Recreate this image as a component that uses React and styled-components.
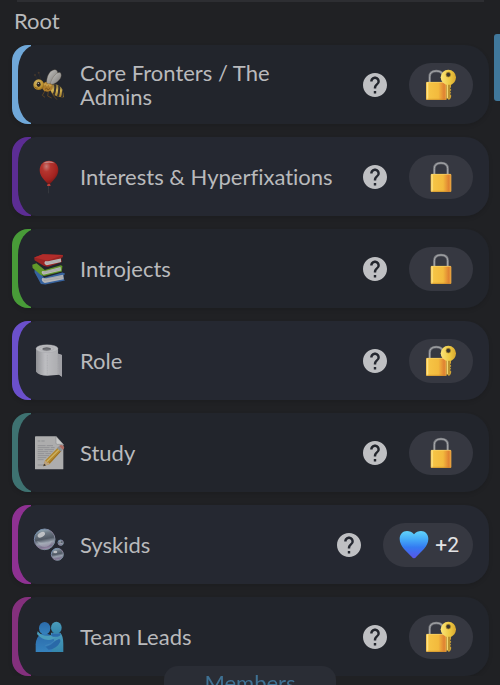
import React, { useId } from 'react';
import styled, { createGlobalStyle, css } from 'styled-components';

const BeeIcon = () => (
  <Emoji viewBox="0 0 102 102" aria-hidden="true">
    <defs>
      <linearGradient id="beeWing" x1="0" y1="0" x2="1" y2="1">
        <stop offset="0" stopColor="#f4f2ec" />
        <stop offset="1" stopColor="#8d8a86" />
      </linearGradient>
      <radialGradient id="beeHead" cx=".4" cy=".35" r=".7">
        <stop offset="0" stopColor="#ffe082" />
        <stop offset=".7" stopColor="#e3ac2e" />
        <stop offset="1" stopColor="#a06f1a" />
      </radialGradient>
      <linearGradient id="beeBody" x1="0" y1="0" x2="0" y2="1">
        <stop offset="0" stopColor="#7b6732" />
        <stop offset=".5" stopColor="#ffd75c" />
        <stop offset="1" stopColor="#b3831f" />
      </linearGradient>
      <clipPath id="beeTail">
        <path d="M59 52C72 44 88 51 94 64C97 73 97 80 99 88C86 89 71 85 63 75C58 68 56 58 59 52Z" />
      </clipPath>
    </defs>
    <g fill="none" stroke="#6b4c22" strokeWidth="3">
      <path d="M20 37L13 22M30 36L23 14" strokeWidth="1" stroke="#4d3c2c" />
      <path d="M42 68L34 82L42 88M52 70L50 84L62 90M60 70L68 84L78 95" />
    </g>
    <circle cx="12" cy="21" r="3" fill="#4d3c2c" />
    <circle cx="23" cy="14" r="3" fill="#4d3c2c" />
    <g clipPath="url(#beeTail)">
      <rect x="55" y="43" width="46" height="48" fill="url(#beeBody)" />
      <path d="M70 44Q77 60 67 84M83 46Q88 66 79 92M95 60Q98 76 91 92" fill="none" stroke="#3c3530" strokeWidth="6" />
    </g>
    <ellipse cx="49" cy="56" rx="16" ry="15" fill="#d0922b" />
    <path d="M38 52L43 47L48 53L53 47L57 54L61 51" fill="none" stroke="#f0bd55" strokeWidth="4" />
    <path d="M42 64L47 60L51 66L57 61" fill="none" stroke="#99631b" strokeWidth="3" />
    <path d="M47 43C47 26 55 7 71 5C85 5 82 28 66 42C59 48 48 49 47 43Z" fill="url(#beeWing)" stroke="#746653" strokeWidth="1" />
    <path d="M59 43C65 25 79 10 88 14C96 24 85 40 69 47C62 50 57 49 59 43Z" fill="url(#beeWing)" stroke="#746653" strokeWidth="1" />
    <circle cx="23" cy="50" r="16" fill="url(#beeHead)" />
    <ellipse cx="23" cy="49" rx="6" ry="8" fill="#30271d" />
    <circle cx="22" cy="46" r="2" fill="#fff" />
    <path d="M11 56Q14 62 20 60" fill="none" stroke="#75501b" strokeWidth="2" />
  </Emoji>
);

const BalloonIcon = () => (
  <Emoji viewBox="0 0 102 102" aria-hidden="true">
    <defs>
      <radialGradient id="balloonSkin" cx=".36" cy=".24" r=".75">
        <stop offset="0" stopColor="#ee8f87" />
        <stop offset=".3" stopColor="#d9382e" />
        <stop offset=".75" stopColor="#c3221c" />
        <stop offset="1" stopColor="#861511" />
      </radialGradient>
    </defs>
    <path d="M53 77Q51 88 53 100" fill="none" stroke="#666" strokeWidth="1" />
    <path d="M54 2C71 2 82 14 82 30C82 48 67 62 54 74C40 62 26 48 26 30C26 14 37 2 54 2Z" fill="url(#balloonSkin)" />
    <path d="M36 10Q53 -2 72 10Q54 6 36 10Z" fill="#f2d6d2" opacity=".6" />
    <path d="M50 72H57L59 78H48Z" fill="#df473d" />
  </Emoji>
);

const BooksIcon = () => (
  <Emoji viewBox="0 0 106 102" aria-hidden="true">
    <path d="M11 53L17 49L41 78L98 62L106 65L105 68L101 71L103 84L106 87L45 99L31 98L11 61Z" fill="#3c72bb" />
    <path d="M35 79Q30 88 43 95L102 83L100 69L48 80Z" fill="#d9dadb" />
    <path d="M39 82L100 73M40 87L101 78" stroke="#9da0a5" strokeWidth="1" fill="none" />
    <path d="M4 38L17 33L43 54L93 39L98 42L96 59L41 73L31 70L5 48Z" fill="#72b52a" />
    <path d="M36 57Q29 62 39 69L94 56L92 45L45 57Z" fill="#e0e0dc" />
    <path d="M38 60L91 49M38 64L92 53" stroke="#999" strokeWidth="1" fill="none" />
    <path d="M10 15L37 5L100 7L99 14L94 17L96 29L53 44L41 42L11 24Z" fill="#b82522" />
    <path d="M44 27Q38 35 49 39L94 29L93 18L53 27Z" fill="#e3e1df" />
    <path d="M46 31L92 22M46 35L93 26" stroke="#aaa" strokeWidth="1" fill="none" />
    <path d="M10 15L37 5L100 7L51 25Z" fill="#d52e2a" />
  </Emoji>
);

const PaperRollIcon = () => (
  <Emoji viewBox="0 0 102 102" aria-hidden="true">
    <defs>
      <linearGradient id="rollSide">
        <stop offset="0" stopColor="#aaaaad" />
        <stop offset=".35" stopColor="#e3e3e5" />
        <stop offset=".8" stopColor="#d1d1d3" />
        <stop offset="1" stopColor="#b8b8bb" />
      </linearGradient>
    </defs>
    <path d="M15 13V83Q24 95 49 95L85 92L93 98V33L81 29V13Z" fill="url(#rollSide)" />
    <path d="M81 29L93 33V98L84 92Z" fill="#bfbfc3" />
    <path d="M49 33V92M81 17V90" stroke="#b5b5b8" strokeWidth="1" strokeDasharray="3 2" />
    <ellipse cx="48" cy="14" rx="33" ry="12" fill="#e0e0e2" stroke="#bcbcc0" strokeWidth="1" />
    <ellipse cx="47" cy="14" rx="22" ry="7" fill="none" stroke="#bababd" strokeWidth="1" />
    <ellipse cx="47" cy="15" rx="13" ry="5" fill="#858589" />
    <path d="M36 14Q47 10 58 14" fill="none" stroke="#68686c" strokeWidth="2" />
  </Emoji>
);

const MemoIcon = () => (
  <Emoji viewBox="0 0 102 102" aria-hidden="true">
    <path d="M14 1H75L97 25V98Q97 100 95 100H14Q12 100 12 98V3Q12 1 14 1Z" fill="#d0d0ce" />
    <path d="M75 1L97 25H79Q75 25 75 21Z" fill="#f0f0ed" stroke="#77777a" strokeWidth="1" />
    <path
      d="M20 15h8m3 0h10M20 29h24m3 0h19M20 35h36m3 0h12M20 41h17m3 0h29M20 47h32m3 0h10M20 53h20m3 0h17M20 59h35M20 65h26M20 71h18M20 87h20"
      stroke="#9b9c9e"
      strokeWidth="2"
    />
    <path d="M37 91L42 74L80 35L91 45L56 84Z" fill="#d7a02c" />
    <path d="M47 77L86 39" stroke="#f4d472" strokeWidth="4" />
    <path d="M54 82L90 45" stroke="#a36d20" strokeWidth="2" />
    <path d="M78 36L84 30L95 41L90 47Z" fill="#a8adb0" />
    <path d="M84 30Q91 24 97 30Q103 36 95 41Z" fill="#ce7d70" />
    <path d="M37 91L42 74Q47 75 49 80Q54 79 56 84Z" fill="#e2c293" />
    <path d="M37 91L39 83L45 88Z" fill="#313030" />
  </Emoji>
);

const BubblesIcon = () => (
  <Emoji viewBox="0 0 102 102" aria-hidden="true">
    <defs>
      <linearGradient id="bubbleFill" x1=".4" y1="0" x2=".6" y2="1">
        <stop offset="0" stopColor="#b4cfdc" />
        <stop offset=".22" stopColor="#7f8c98" />
        <stop offset=".48" stopColor="#5c6672" />
        <stop offset=".66" stopColor="#b4becb" />
        <stop offset=".85" stopColor="#9488a9" />
        <stop offset="1" stopColor="#cbaed2" />
      </linearGradient>
      <linearGradient id="bubbleRim" x1="0" y1="0" x2="1" y2="1">
        <stop offset="0" stopColor="#80b6dc" />
        <stop offset=".55" stopColor="#a292ad" />
        <stop offset="1" stopColor="#8cbfc8" />
      </linearGradient>
    </defs>
    <g fill="url(#bubbleFill)" stroke="url(#bubbleRim)" strokeWidth="3">
      <circle cx="41" cy="34" r="31" />
      <circle cx="79" cy="79" r="18" />
      <circle cx="89" cy="44" r="8" />
    </g>
    <ellipse cx="31" cy="20" rx="12" ry="7" fill="#fff" opacity=".8" transform="rotate(-30 31 20)" />
    <path d="M18 38Q38 51 63 38Q56 57 40 57Q25 56 18 38Z" fill="#e1e5ef" opacity=".4" />
    <ellipse cx="73" cy="72" rx="6" ry="4" fill="#fff" opacity=".8" />
    <circle cx="87" cy="42" r="2" fill="#fff" />
  </Emoji>
);

const HugIcon = () => (
  <Emoji viewBox="0 0 102 102" aria-hidden="true">
    <defs>
      <linearGradient id="hugBack" x1="0" y1="0" x2="0" y2="1">
        <stop offset="0" stopColor="#55bbdf" />
        <stop offset="1" stopColor="#3aa0cf" />
      </linearGradient>
      <linearGradient id="hugFront" x1="0" y1="0" x2="0" y2="1">
        <stop offset="0" stopColor="#2e7dcb" />
        <stop offset="1" stopColor="#3b9ae2" />
      </linearGradient>
    </defs>
    <path d="M60 38L88 38Q97 48 97 72V96H58Z" fill="url(#hugBack)" />
    <ellipse cx="76" cy="23" rx="16" ry="18" fill="url(#hugBack)" />
    <path d="M14 96V73Q15 52 29 43Q44 37 60 46L70 61L62 96Z" fill="url(#hugFront)" />
    <path d="M20 34Q35 52 61 46L66 39Q73 40 74 49Q70 60 52 60Q31 59 18 42Z" fill="#55bbdf" />
    <ellipse cx="41" cy="25" rx="17" ry="19" fill="url(#hugFront)" />
    <path d="M63 39Q76 44 87 39Q92 45 84 49Q70 53 60 47Z" fill="#2e7dcb" />
    <path d="M44 80Q61 77 72 62L84 57Q90 58 88 65Q77 87 53 89Z" fill="#2b7bc8" />
    <path d="M43 77Q60 74 72 61L83 56" fill="none" stroke="#69b9ea" strokeWidth="1" />
  </Emoji>
);

// `withKey` moves the padlock to the left and hangs the key over its right edge
const PadlockIcon = ({ withKey }) => {
  const id = useId();
  return (
    <Symbol viewBox="0 0 102 102" aria-hidden="true">
      <defs>
        <linearGradient id={`${id}body`}>
          <stop offset="0" stopColor="#e9a92d" />
          <stop offset=".06" stopColor="#ffe88d" />
          <stop offset=".14" stopColor="#f6c445" />
          <stop offset=".6" stopColor="#f3ba3d" />
          <stop offset=".88" stopColor="#df8132" />
          <stop offset="1" stopColor="#ecae43" />
        </linearGradient>
        <linearGradient id={`${id}key`}>
          <stop offset="0" stopColor="#fbe57a" />
          <stop offset=".6" stopColor="#edc841" />
          <stop offset="1" stopColor="#d8a72e" />
        </linearGradient>
      </defs>
      <g transform={withKey ? 'translate(-14 0)' : undefined}>
        <path d="M31 45V26Q31 9 51 9Q71 9 71 26V45" fill="none" stroke="#77797e" strokeWidth="7" />
        <path d="M31 45V26Q31 9 51 9Q71 9 71 26V45" fill="none" stroke="#a9aaad" strokeWidth="3" />
        <rect x="20" y="42" width="62" height="54" rx="3" fill={`url(#${id}body)`} />
        <path d="M22 43H80" stroke="#f9d66d" strokeWidth="2" />
        <path d="M22 94H80" stroke="#c78929" strokeWidth="2" />
      </g>
      {withKey && (
        <g>
          <path d="M67 46H81V58L78 61L82 66L78 70L81 74L78 78L82 83L80 91L75 96L68 90Z" fill="#d3a635" />
          <path d="M70 48V90" stroke="#f7df7b" strokeWidth="3" />
          <path d="M75 48V91" stroke="#8e6d22" strokeWidth="2" />
          <path
            d="M73 5A23 23 0 0 1 96 28Q95 44 82 50H66Q51 43 50 28A23 23 0 0 1 73 5Z"
            fill={`url(#${id}key)`}
          />
          <circle cx="73" cy="20" r="7" fill="#3b362d" stroke="#b28d2d" strokeWidth="2" />
        </g>
      )}
    </Symbol>
  );
};

const HeartIcon = () => (
  <Symbol viewBox="0 0 102 102" aria-hidden="true">
    <defs>
      <linearGradient id="heartFill" x1="0" y1="0" x2="0" y2="1">
        <stop offset="0" stopColor="#62d3fa" />
        <stop offset=".3" stopColor="#45acf7" />
        <stop offset=".6" stopColor="#347bf2" />
        <stop offset="1" stopColor="#5955e8" />
      </linearGradient>
    </defs>
    <path
      d="M51 19C45 12 38 9 30 9C17 9 8 19 8 33C8 56 31 72 44 86Q51 95 58 86C71 72 94 56 94 33C94 19 85 9 72 9C64 9 57 12 51 19Z"
      fill="url(#heartFill)"
    />
  </Symbol>
);

const HelpIcon = () => (
  <svg width="24" height="24" viewBox="2 2 20 20" fill="currentColor" aria-hidden="true">
    <path d="M12 2C6.48 2 2 6.48 2 12s4.48 10 10 10 10-4.48 10-10S17.52 2 12 2zm1 17h-2v-2h2v2zm2.07-7.75l-.9.92C13.45 12.9 13 13.5 13 15h-2v-.5c0-1.1.45-2.1 1.17-2.83l1.24-1.26c.37-.36.59-.86.59-1.41 0-1.1-.9-2-2-2s-2 .9-2 2H8c0-2.21 1.79-4 4-4s4 1.79 4 4c0 .88-.36 1.68-.93 2.25z" />
  </svg>
);

const groups = [
  { name: 'Core Fronters / The Admins', color: '#70a8d9', Icon: BeeIcon, privacy: 'key' },
  { name: 'Interests & Hyperfixations', color: '#5c2d94', Icon: BalloonIcon, privacy: 'lock' },
  { name: 'Introjects', color: '#489b38', Icon: BooksIcon, privacy: 'lock' },
  { name: 'Role', color: '#6b50cb', Icon: PaperRollIcon, privacy: 'key' },
  { name: 'Study', color: '#3e7271', Icon: MemoIcon, privacy: 'lock' },
  { name: 'Syskids', color: '#8e3192', Icon: BubblesIcon, privacy: 'heart', more: '+2' },
  { name: 'Team Leads', color: '#84307d', Icon: HugIcon, privacy: 'key' },
];

const GroupRow = ({ group, alt }) => {
  const { name, color, Icon, privacy, more } = group;
  return (
    <ColorEdge $color={color}>
      <Card $alt={alt}>
        <Icon />
        <Name>{name}</Name>
        <HelpButton type="button" aria-label={`About ${name}`}>
          <HelpIcon />
        </HelpButton>
        <PrivacyButton type="button" aria-label={`Privacy of ${name}`}>
          {privacy === 'heart' ? <HeartIcon /> : <PadlockIcon withKey={privacy === 'key'} />}
          {more && <span>{more}</span>}
        </PrivacyButton>
      </Card>
    </ColorEdge>
  );
};

const App = () => (
  <>
    <GlobalStyle />
    <Page>
      <Divider />
      <Heading>Root</Heading>
      <List>
        {groups.map((group, idx) => (
          <GroupRow key={group.name} group={group} alt={idx % 2 === 1} />
        ))}
      </List>
    </Page>
    <ScrollThumb />
    <BottomDock>
      <MembersTab type="button">Members</MembersTab>
    </BottomDock>
  </>
);

const GlobalStyle = createGlobalStyle`
  * {
    box-sizing: border-box;
  }
  body {
    margin: 0;
    background: #202124;
    color: #b9babc;
    font-family: Lato, 'Open Sans', sans-serif;
    font-size: 22px;
    font-variant-ligatures: none;
    line-height: 24px;
  }
  button {
    border: 0;
    padding: 0;
    color: inherit;
    font: inherit;
  }
`;

const Page = styled.main`
  padding: 0 11px 0 12px;
`;

const Divider = styled.hr`
  height: 2px;
  margin: 0 5px;
  border: 0;
  background: #2d2e32;
`;

const Heading = styled.h1`
  margin: 7px 2px 12px;
  font-size: 22px;
  font-weight: 400;
`;

const List = styled.ul`
  display: flex;
  flex-direction: column;
  gap: 13px;
  margin: 0;
  padding: 0;
  list-style: none;
`;

const ColorEdge = styled.li`
  padding-left: 6px;
  border-radius: 16px 24px 24px 16px;
  background: linear-gradient(to right, ${props => props.$color} 19px, transparent 19px);
  box-shadow: 0 2px 4px rgba(0, 0, 0, 0.12);
`;

const Card = styled.div`
  display: flex;
  align-items: center;
  min-height: 79px;
  padding: 0 16px 0 13px;
  border-radius: 18px 24px 24px 18px / 26px 24px 24px 26px;
  background: #22252c;
  ${props =>
    props.$alt &&
    css`
      background: #252831;
    `}
`;

const Emoji = styled.svg`
  flex: none;
  width: 34px;
  height: 34px;
  opacity: 0.8;
`;

const Symbol = styled.svg`
  flex: none;
  width: 34px;
  height: 34px;
`;

const Name = styled.span`
  flex: 1;
  margin: 0 24px 0 15px;
`;

const HelpButton = styled.button`
  display: flex;
  margin-right: 22px;
  border-radius: 50%;
  background: none;
  color: #bfc0c3;
`;

const PrivacyButton = styled.button`
  display: flex;
  align-items: center;
  justify-content: center;
  gap: 4px;
  min-width: 64px;
  height: 44px;
  padding: 0 14px;
  border-radius: 22px;
  background: #363841;
  color: #e3e3e5;
  font-family: Roboto, sans-serif;
  font-size: 21px;
`;

const ScrollThumb = styled.div`
  position: fixed;
  top: 34px;
  right: 0;
  width: 6px;
  height: 67px;
  border-radius: 3px 0 0 3px;
  background: #40789c;
`;

// Only the top of the tab peeks in above the bottom of the window
const BottomDock = styled.div`
  position: fixed;
  right: 0;
  bottom: 0;
  left: 0;
  display: flex;
  justify-content: center;
  height: 19px;
  overflow: hidden;
`;

const MembersTab = styled.button`
  width: 172px;
  height: 34px;
  border-radius: 14px 14px 0 0;
  background: #2a2d35;
  color: #3f7193;
  line-height: 34px;
`;

export default App;
